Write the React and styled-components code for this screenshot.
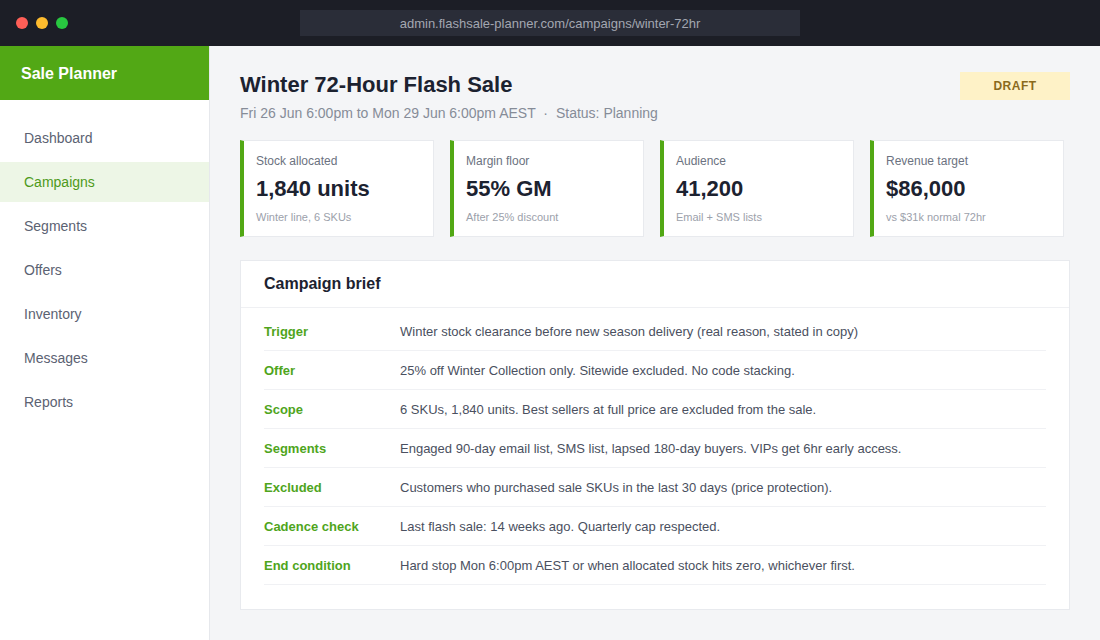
import styled, { createGlobalStyle } from 'styled-components'

const GlobalStyle = createGlobalStyle`
  html, body {
    margin: 0;
    padding: 0;
    background: #f4f5f7;
    font-family: "Liberation Sans", Arial, sans-serif;
  }
  * { box-sizing: border-box; }
`

const stats = [
  { label: 'Stock allocated', value: '1,840 units', note: 'Winter line, 6 SKUs' },
  { label: 'Margin floor', value: '55% GM', note: 'After 25% discount' },
  { label: 'Audience', value: '41,200', note: 'Email + SMS lists' },
  { label: 'Revenue target', value: '$86,000', note: 'vs $31k normal 72hr' },
]

const brief = [
  ['Trigger', 'Winter stock clearance before new season delivery (real reason, stated in copy)'],
  ['Offer', '25% off Winter Collection only. Sitewide excluded. No code stacking.'],
  ['Scope', '6 SKUs, 1,840 units. Best sellers at full price are excluded from the sale.'],
  ['Segments', 'Engaged 90-day email list, SMS list, lapsed 180-day buyers. VIPs get 6hr early access.'],
  ['Excluded', 'Customers who purchased sale SKUs in the last 30 days (price protection).'],
  ['Cadence check', 'Last flash sale: 14 weeks ago. Quarterly cap respected.'],
  ['End condition', 'Hard stop Mon 6:00pm AEST or when allocated stock hits zero, whichever first.'],
]

const nav = ['Dashboard', 'Campaigns', 'Segments', 'Offers', 'Inventory', 'Messages', 'Reports']

function App() {
  return (
    <>
      <GlobalStyle />
      <Window>
        <TitleBar>
          <Dots>
            <Dot color="#ff5f57" />
            <Dot color="#febc2e" />
            <Dot color="#28c840" />
          </Dots>
          <Url>admin.flashsale-planner.com/campaigns/winter-72hr</Url>
        </TitleBar>
        <Body>
          <Sidebar>
            <Brand>Sale Planner</Brand>
            <Nav>
              {nav.map((item) => (
                <NavItem key={item} active={item === 'Campaigns'}>{item}</NavItem>
              ))}
            </Nav>
          </Sidebar>
          <Main>
            <PageHead>
              <div>
                <Title>Winter 72-Hour Flash Sale</Title>
                <Meta>Fri 26 Jun 6:00pm to Mon 29 Jun 6:00pm AEST <Sep>·</Sep> Status: Planning</Meta>
              </div>
              <Badge>DRAFT</Badge>
            </PageHead>
            <Stats>
              {stats.map((s) => (
                <Stat key={s.label}>
                  <StatLabel>{s.label}</StatLabel>
                  <StatValue>{s.value}</StatValue>
                  <StatNote>{s.note}</StatNote>
                </Stat>
              ))}
            </Stats>
            <Panel>
              <PanelHead>Campaign brief</PanelHead>
              <PanelBody>
                {brief.map(([k, v]) => (
                  <Row key={k}>
                    <RowKey>{k}</RowKey>
                    <RowValue>{v}</RowValue>
                  </Row>
                ))}
              </PanelBody>
            </Panel>
          </Main>
        </Body>
      </Window>
    </>
  )
}

export default App

const Window = styled.div`
  width: 1100px;
  height: 640px;
  display: flex;
  flex-direction: column;
  overflow: hidden;
`

const TitleBar = styled.div`
  height: 46px;
  background: #1c1e26;
  display: flex;
  align-items: center;
  padding-left: 16px;
`

const Dots = styled.div`
  display: flex;
  gap: 8px;
`

const Dot = styled.span`
  width: 12px;
  height: 12px;
  border-radius: 50%;
  background: ${(p) => p.color};
`

const Url = styled.div`
  margin-left: 232px;
  width: 500px;
  height: 26px;
  background: #2a2d38;
  color: #a3a7b1;
  font-size: 13px;
  display: flex;
  align-items: center;
  justify-content: center;
`

const Body = styled.div`
  flex: 1;
  display: flex;
  min-height: 0;
`

const Sidebar = styled.aside`
  width: 210px;
  background: #ffffff;
  border-right: 1px solid #e6e8ec;
  display: flex;
  flex-direction: column;
`

const Brand = styled.div`
  height: 54px;
  background: #52a815;
  color: #ffffff;
  font-size: 16px;
  font-weight: 700;
  display: flex;
  align-items: center;
  padding: 2px 0 0 21px;
`

const Nav = styled.nav`
  padding: 16px 0;
  display: flex;
  flex-direction: column;
`

const NavItem = styled.div`
  height: 40px;
  margin: 2px 0;
  display: flex;
  align-items: center;
  padding-left: 24px;
  font-size: 14px;
  color: ${(p) => (p.active ? '#4d9a1a' : '#5b6272')};
  background: ${(p) => (p.active ? '#edf6e6' : 'transparent')};
`

const Main = styled.main`
  flex: 1;
  background: #f4f5f7;
  padding: 26px 30px 0 30px;
`

const PageHead = styled.div`
  display: flex;
  justify-content: space-between;
  align-items: flex-start;
`

const Title = styled.h1`
  margin: 0;
  font-size: 22px;
  font-weight: 700;
  color: #1c2230;
  line-height: 26px;
`

const Meta = styled.div`
  margin-top: 6px;
  font-size: 14px;
  color: #868c98;
  line-height: 18px;
`

const Sep = styled.span`
  margin: 0 4px;
`

const Badge = styled.div`
  width: 110px;
  height: 28px;
  background: #fef2c7;
  color: #8a6a1c;
  font-size: 12px;
  font-weight: 700;
  letter-spacing: 0.5px;
  display: flex;
  align-items: center;
  justify-content: center;
`

const Stats = styled.div`
  margin-top: 18px;
  display: grid;
  grid-template-columns: repeat(4, 194px);
  gap: 16px;
`

const Stat = styled.div`
  height: 97px;
  background: #ffffff;
  border: 1px solid #e8eaee;
  border-left: 4px solid #52a815;
  padding: 12px 12px 0 12px;
`

const StatLabel = styled.div`
  font-size: 12px;
  color: #6b7280;
  line-height: 16px;
`

const StatValue = styled.div`
  margin-top: 7px;
  font-size: 22px;
  font-weight: 700;
  color: #1c2230;
  line-height: 26px;
`

const StatNote = styled.div`
  margin-top: 8px;
  font-size: 11px;
  color: #9ca1ab;
  line-height: 14px;
`

const Panel = styled.section`
  margin-top: 23px;
  background: #ffffff;
  border: 1px solid #e8eaee;
`

const PanelHead = styled.div`
  height: 47px;
  display: flex;
  align-items: center;
  padding: 0 23px;
  font-size: 16px;
  font-weight: 700;
  color: #1c2230;
  border-bottom: 1px solid #eff0f3;
`

const PanelBody = styled.div`
  padding: 4px 23px 24px 23px;
`

const Row = styled.div`
  height: 39px;
  display: flex;
  align-items: center;
  border-bottom: 1px solid #f0f1f4;
`

const RowKey = styled.div`
  width: 136px;
  flex-shrink: 0;
  font-size: 13px;
  font-weight: 700;
  color: #4fa51c;
`

const RowValue = styled.div`
  font-size: 13px;
  color: #4a5060;
`
